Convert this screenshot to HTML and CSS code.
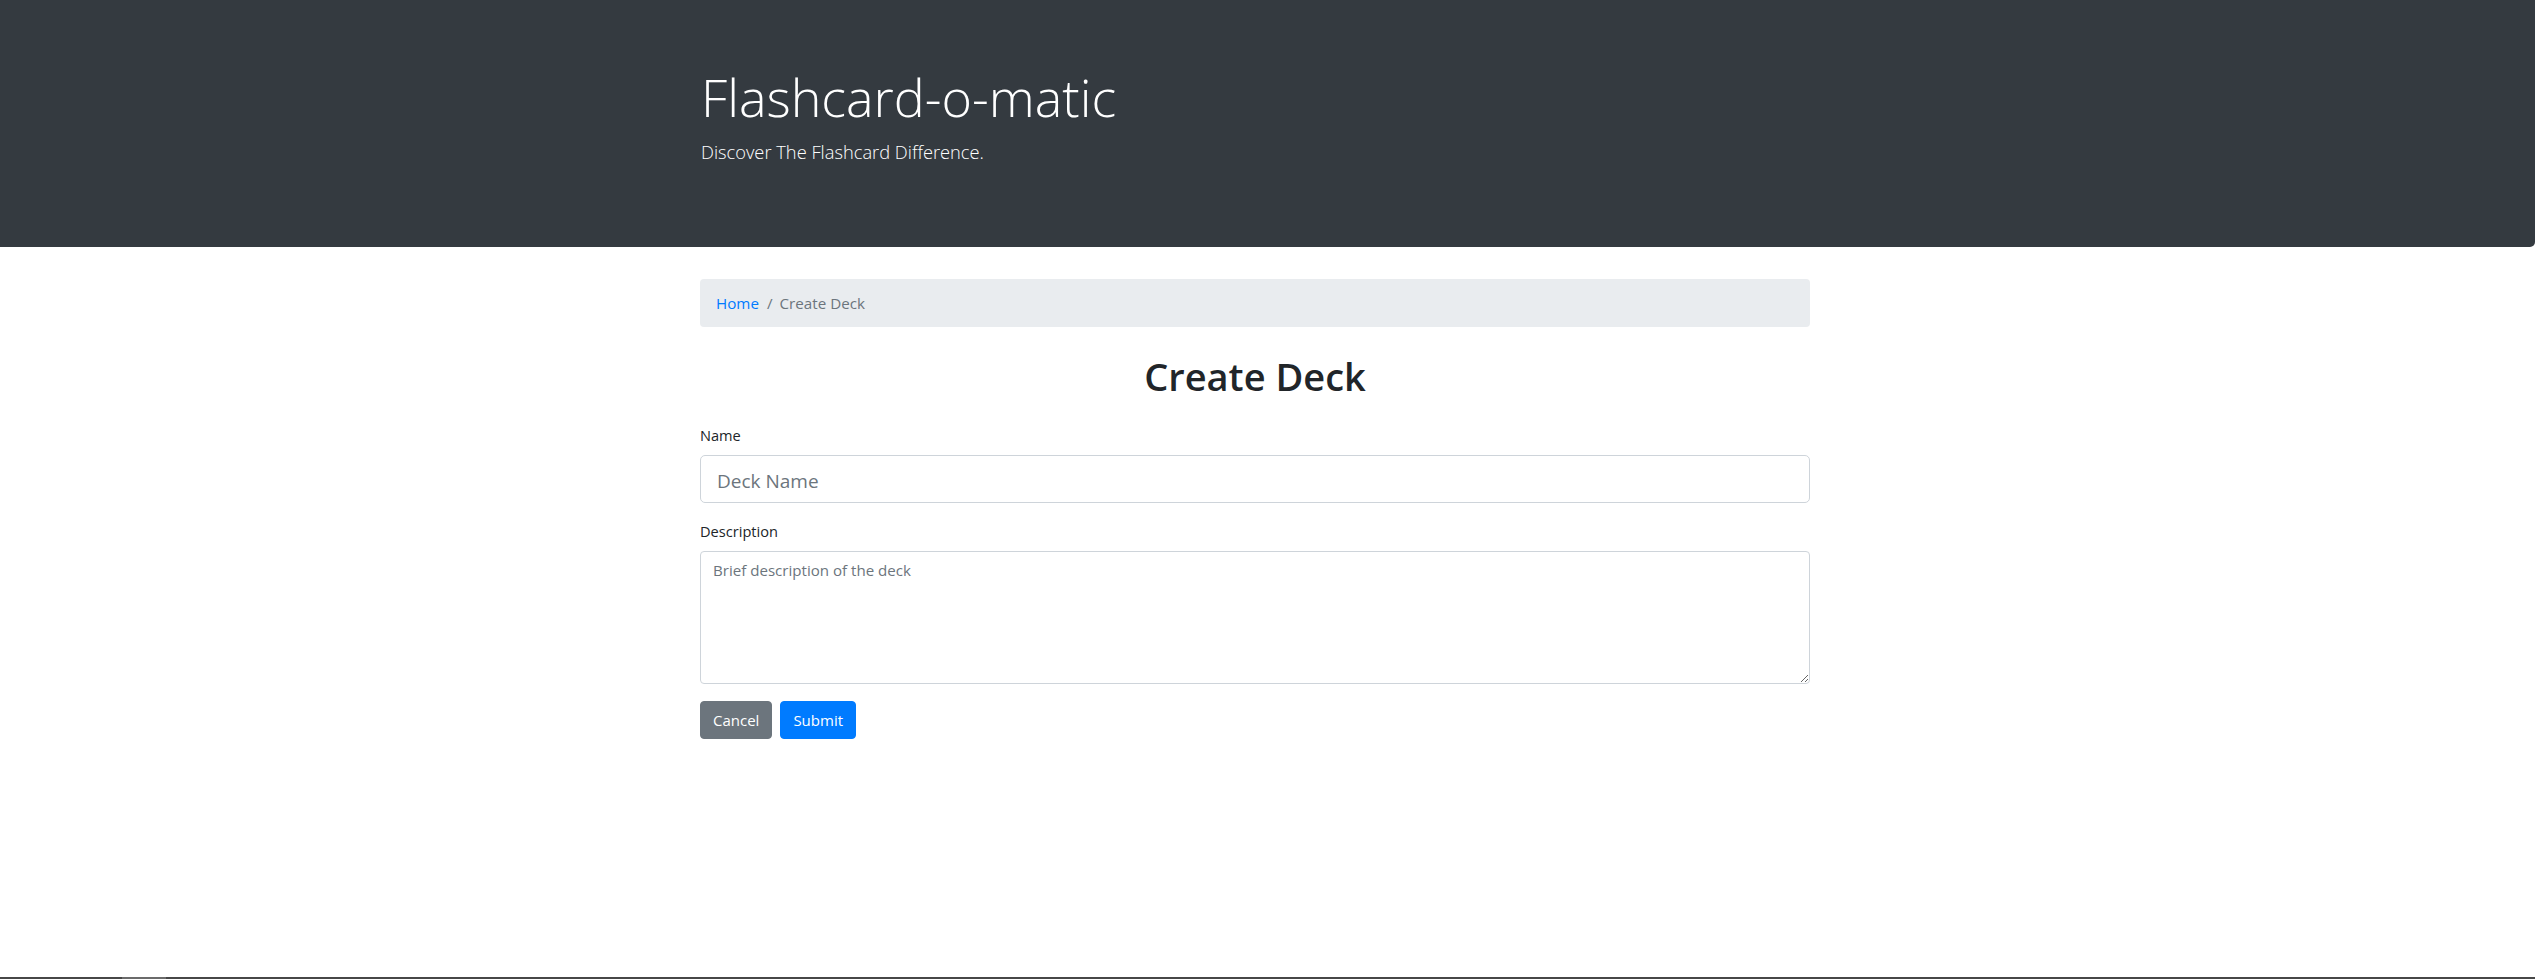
FILE: index.html
```html
<!DOCTYPE html>
<html lang="en">
<head>
<meta charset="utf-8">
<title>Flashcard-o-matic</title>
<link rel="stylesheet" href="styles.css">
</head>
<body>
<header class="jumbotron">
  <div class="container">
    <h1 class="display-title">Flashcard-o-matic</h1>
    <p class="lead">Discover The Flashcard Difference.</p>
  </div>
</header>
<main class="container">
  <nav class="breadcrumb">
    <a class="crumb-link" href="#">Home</a>
    <span class="crumb-sep">/</span>
    <span class="crumb-active">Create Deck</span>
  </nav>
  <h1 class="page-title">Create Deck</h1>
  <form class="deck-form">
    <div class="form-group">
      <label class="form-label" for="name">Name</label>
      <input class="form-control form-control-lg" id="name" type="text" placeholder="Deck Name">
    </div>
    <div class="form-group">
      <label class="form-label" for="description">Description</label>
      <textarea class="form-control form-textarea" id="description" placeholder="Brief description of the deck"></textarea>
    </div>
    <div class="actions">
      <button type="button" class="btn btn-secondary">Cancel</button>
      <button type="submit" class="btn btn-primary">Submit</button>
    </div>
  </form>
</main>
<div class="taskbar"><div class="taskbar-item"></div></div>
</body>
</html>
```

FILE: styles.css
```css
* {
  box-sizing: border-box;
}

html, body {
  margin: 0;
  padding: 0;
}

body {
  font-family: "Open Sans", "Noto Sans", sans-serif;
  color: #212529;
  background: #ffffff;
  font-size: 15px;
  line-height: 1.5;
}

.container {
  width: 1110px;
  margin-left: calc(50% - 567.5px);
}

.jumbotron {
  background: #343a40;
  color: #ffffff;
  padding: 63px 0 64px;
  border-radius: 0 0 5px 0;
}

.display-title {
  margin: 0 0 7px 1px;
  font-size: 52px;
  font-weight: 300;
  line-height: 67px;
}

.lead {
  margin: 0 0 16px 1px;
  font-size: 18.3px;
  font-weight: 300;
  line-height: 30px;
}

main.container {
  margin-top: 32px;
}

.breadcrumb {
  display: flex;
  align-items: center;
  height: 48px;
  padding: 0 16px;
  background: #e9ecef;
  border-radius: 4px;
  font-size: 15.2px;
  line-height: 24px;
}

.crumb-link {
  color: #007bff;
  text-decoration: none;
}

.crumb-sep {
  color: #6c757d;
  padding: 0 7px 0 8px;
}

.crumb-active {
  color: #6c757d;
}

.page-title {
  margin: 26px 0 24px;
  text-align: center;
  font-size: 38px;
  font-weight: 600;
  line-height: 46px;
}

.form-group {
  margin-bottom: 16px;
}

.form-label {
  display: block;
  margin-bottom: 8px;
  font-size: 14.6px;
  line-height: 24px;
}

.form-control {
  display: block;
  width: 100%;
  font-family: inherit;
  color: #495057;
  background: #ffffff;
  border: 1px solid #ced4da;
  outline: none;
}

.form-control::placeholder {
  color: #6c757d;
  opacity: 1;
}

.form-control-lg {
  height: 48px;
  padding: 10px 16px 6px;
  font-size: 19px;
  line-height: 28.5px;
  border-radius: 5px;
}

.form-textarea {
  height: 133px;
  padding: 5.5px 12px;
  font-size: 15.1px;
  line-height: 24px;
  border-radius: 4px;
}

.actions {
  display: flex;
  gap: 8px;
  margin-top: 17px;
}

.btn {
  height: 38px;
  padding: 6px 12px;
  font-family: inherit;
  font-size: 15px;
  line-height: 24px;
  color: #ffffff;
  border: 1px solid transparent;
  border-radius: 4px;
  cursor: pointer;
}

.btn-secondary {
  background: #6c757d;
  border-color: #6c757d;
}

.btn-primary {
  background: #007bff;
  border-color: #007bff;
}

.taskbar {
  position: fixed;
  left: 0;
  right: 0;
  bottom: 0;
  height: 2px;
  background: #474747;
}

.taskbar-item {
  width: 44px;
  height: 2px;
  margin-left: 122px;
  background: #6b6b6b;
}
```
